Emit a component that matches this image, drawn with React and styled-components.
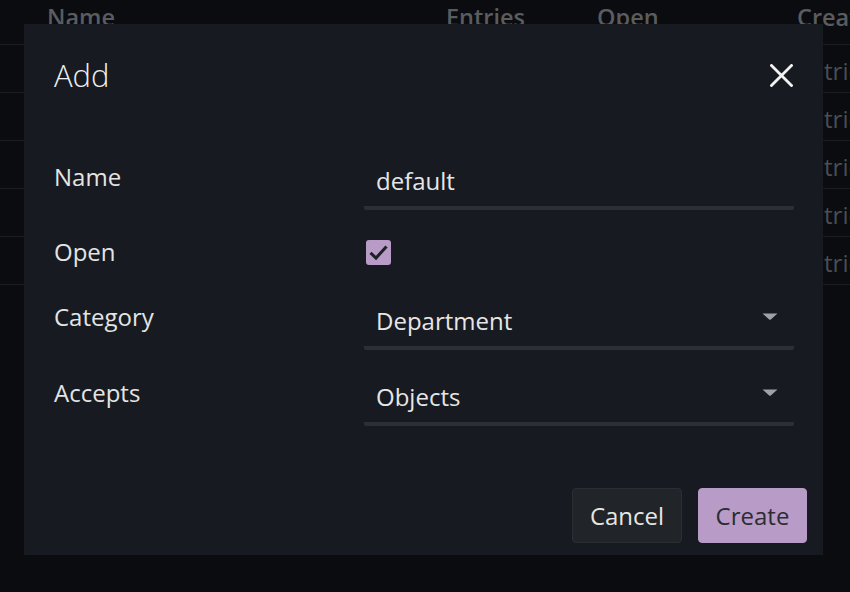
import React from "react";
import styled, { createGlobalStyle } from "styled-components";

const Global = createGlobalStyle`
  html, body { margin: 0; padding: 0; background: #0b0c0f; }
  body { font-family: "Open Sans", "Noto Sans", sans-serif; }
  #root { width: 850px; height: 592px; overflow: hidden; }
`;

const Page = styled.div`
  position: relative;
  width: 850px;
  height: 592px;
  background: #0b0c0f;
  overflow: hidden;
`;

const Table = styled.div`
  display: flex;
  flex-direction: column;
  margin-top: -3px;
`;

const TRow = styled.div`
  display: grid;
  grid-template-columns: 446px 151px 200px 1fr;
  align-items: center;
  height: 48px;
  border-bottom: 1px solid #1b1d21;
  box-sizing: border-box;
`;

const HeadCell = styled.div`
  font-size: 23.5px;
  font-weight: 600;
  color: #5a5c60;
  white-space: nowrap;
  padding-left: ${(p) => (p.$first ? 47 : 0)}px;
  padding-bottom: 7px;
`;

const Cell = styled.div`
  font-size: 24px;
  color: #4b4d52;
  white-space: nowrap;
  padding-left: ${(p) => (p.$first ? 47 : 0)}px;
  margin-left: ${(p) => p.$shift || 0}px;
  padding-top: 4px;
`;

const Dialog = styled.div`
  position: absolute;
  top: 24px;
  left: 24px;
  width: 799px;
  height: 531px;
  background: #171a20;
  display: flex;
  flex-direction: column;
  box-sizing: border-box;
`;

const Header = styled.div`
  display: flex;
  align-items: center;
  justify-content: space-between;
  padding: 33px 30px 0 30px;
`;

const Title = styled.h2`
  margin: 0;
  font-size: 31px;
  line-height: 36px;
  font-weight: 300;
  color: #eceff1;
`;

const CloseBtn = styled.button`
  background: none;
  border: none;
  padding: 0;
  width: 23px;
  height: 23px;
  display: flex;
  cursor: pointer;
`;

const Form = styled.div`
  display: flex;
  flex-direction: column;
  margin-top: 67px;
  padding: 0 29px 0 30px;
`;

const FormRow = styled.div`
  display: grid;
  grid-template-columns: 310px 1fr;
  align-items: ${(p) => (p.$center ? "center" : "start")};
  margin-top: ${(p) => p.$mt || 0}px;
  height: ${(p) => (p.$h ? `${p.$h}px` : "auto")};
`;

const Label = styled.label`
  font-size: 24px;
  line-height: 26px;
  color: #e4e4e4;
  padding-top: ${(p) => (p.$center ? 0 : 4)}px;
`;

const Field = styled.div`
  position: relative;
  height: 50px;
  box-sizing: border-box;
  border-bottom: 4px solid #2c3036;
  border-radius: 0 0 2px 2px;
  padding: 8px 12px 0 12px;
  font-size: 24px;
  line-height: 26px;
  color: #e6e6e6;
`;

const Arrow = styled.svg`
  position: absolute;
  right: 16px;
  top: 13px;
`;

const CheckBox = styled.svg`
  display: block;
  margin-left: 2px;
`;

const Footer = styled.div`
  margin-top: auto;
  display: flex;
  justify-content: flex-end;
  gap: 16px;
  padding: 0 16px 12px 0;
`;

const Button = styled.button`
  height: 55px;
  width: ${(p) => p.$w}px;
  border-radius: 4px;
  font-family: "Open Sans", "Noto Sans", sans-serif;
  font-size: 24px;
  border: 1px solid ${(p) => (p.$primary ? "#b99bc7" : "#2b2f34")};
  background: ${(p) => (p.$primary ? "#b99bc7" : "#212428")};
  color: ${(p) => (p.$primary ? "#2a2d34" : "#e6e6e6")};
  cursor: pointer;
  padding: 0;
`;

const SelectArrow = () => (
  <Arrow width="16" height="7" viewBox="0 0 16 7">
    <path d="M0.5 0.5 H15.5 L8.8 6.4 Q8 7 7.2 6.4 Z" fill="#9fa1a6" />
  </Arrow>
);

const rows = [1, 2, 3, 4, 5];

export default function App() {
  return (
    <Page>
      <Global />
      <Table>
        <TRow>
          <HeadCell $first>Name</HeadCell>
          <HeadCell>Entries</HeadCell>
          <HeadCell>Open</HeadCell>
          <HeadCell>Created</HeadCell>
        </TRow>
        {rows.map((r) => (
          <TRow key={r}>
            <Cell $first>Item {r}</Cell>
            <Cell>0</Cell>
            <Cell>Yes</Cell>
            <Cell $shift={-8}>Metric</Cell>
          </TRow>
        ))}
      </Table>
      <Dialog>
        <Header>
          <Title>Add</Title>
          <CloseBtn aria-label="Close">
            <svg width="23" height="23" viewBox="0 0 23 23">
              <path d="M1.5 1.5 L21.5 21.5 M21.5 1.5 L1.5 21.5" stroke="#f2f2f2" strokeWidth="2.8" strokeLinecap="square" />
            </svg>
          </CloseBtn>
        </Header>
        <Form>
          <FormRow>
            <Label>Name</Label>
            <Field>default</Field>
          </FormRow>
          <FormRow $center $mt={20} $h={44}>
            <Label $center>Open</Label>
            <CheckBox width="25" height="25" viewBox="0 0 25 25">
              <rect x="0" y="0" width="25" height="25" rx="3" fill="#b99bc7" />
              <path d="M4.5 12.8 L10 18 L20.5 6.5" fill="none" stroke="#1d2026" strokeWidth="3" />
            </CheckBox>
          </FormRow>
          <FormRow $mt={26}>
            <Label>Category</Label>
            <Field>
              Department
              <SelectArrow />
            </Field>
          </FormRow>
          <FormRow $mt={26}>
            <Label>Accepts</Label>
            <Field>
              Objects
              <SelectArrow />
            </Field>
          </FormRow>
        </Form>
        <Footer>
          <Button $w={110}>Cancel</Button>
          <Button $w={109} $primary>Create</Button>
        </Footer>
      </Dialog>
    </Page>
  );
}
